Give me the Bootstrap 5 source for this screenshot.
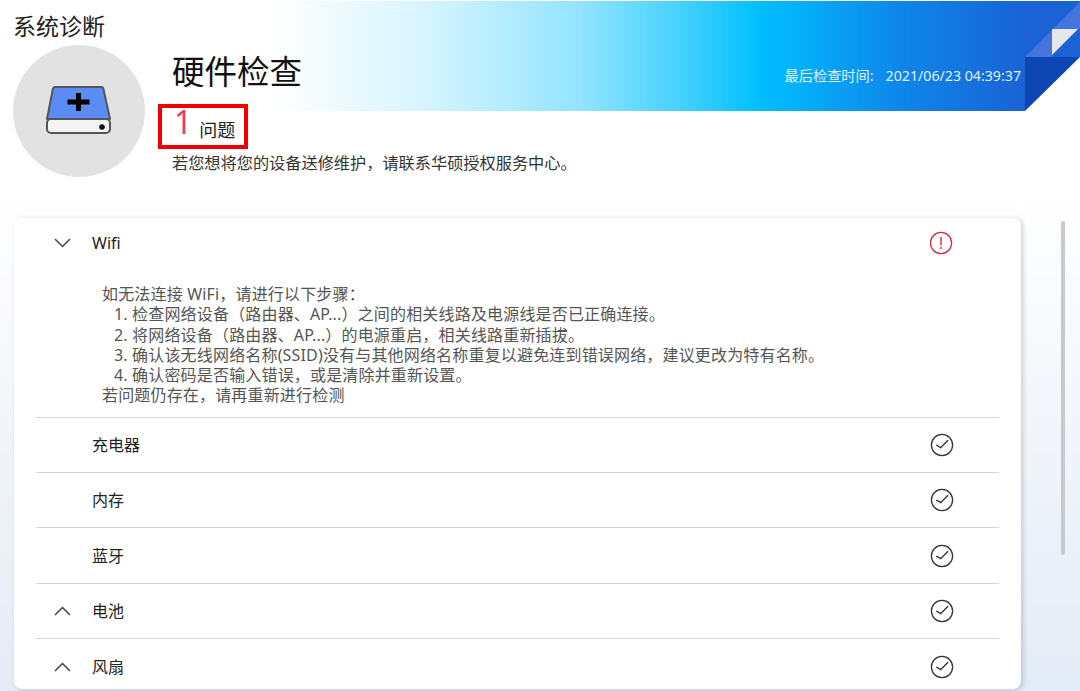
<!DOCTYPE html>
<html lang="zh-CN">
<head>
  <meta charset="UTF-8">
  <meta name="viewport" content="width=device-width, initial-scale=1.0">
  <title>系统诊断</title>
  <link href="https://cdn.jsdelivr.net/npm/bootstrap@5.3.0/dist/css/bootstrap.min.css" rel="stylesheet">
  <style>
    html, body {
      height: 691px;
      overflow: hidden;
    }
    body {
      font-family: "Noto Sans", "Noto Sans CJK SC", sans-serif;
      color: #222;
      background: linear-gradient(180deg, #fff 0, #fff 190px, #e3ebf6 691px);
    }
    .diag-head {
      position: relative;
      height: 218px;
      background-image: linear-gradient(90deg, #fff 270px, #d8f5ff 420px, #93e4ff 580px, #3dcfff 690px, #00bfff 760px, #0e86ea 900px, #1a62d6 1025px);
      background-size: 1025px 110px;
      background-position: 0 1px;
      background-repeat: no-repeat;
    }
    .head-fold {
      position: absolute;
      top: 0;
      right: 0;
    }
    .app-title {
      font-size: 23px;
      line-height: 30px;
      font-weight: 400;
      margin: 0;
      padding: 11px 0 0 13px;
      height: 45px;
    }
    .drive-disc {
      width: 132px;
      height: 132px;
      margin-left: 13px;
      background: #e2e2e2;
      flex-shrink: 0;
    }
    .drive-disc svg {
      margin-bottom: 2px;
    }
    .head-info {
      padding-left: 13px;
      flex: 1;
    }
    .head-top {
      height: 59px;
      padding: 7px 59px 0 14px;
    }
    .head-top h2 {
      font-size: 32.5px;
      line-height: 40px;
      font-weight: 400;
      color: #111;
      margin: 0;
    }
    .check-time {
      font-size: 14.2px;
      line-height: 18px;
      color: #dff4ff;
      margin-top: 15px;
    }
    .check-time span {
      margin-left: 12px;
    }
    .issue-box {
      width: 90px;
      height: 45px;
      border: 4px solid #f00000;
      padding-left: 12px;
    }
    .issue-num {
      font-size: 32px;
      line-height: 30px;
      font-weight: 400;
      color: #f0386b;
      margin-top: -1px;
    }
    .issue-word {
      font-size: 18px;
      line-height: 24px;
      margin-left: 7px;
      margin-top: 10px;
      color: #222;
    }
    .head-note {
      font-size: 16.2px;
      line-height: 20px;
      color: #333;
      margin: 4px 0 0 14px;
    }
    .results-wrap {
      padding-left: 14px;
      gap: 40px;
    }
    .results-card {
      width: 1007px;
      height: 471px;
      padding: 0 22px;
      border: 0;
      border-radius: 8px;
      box-shadow: 2px 1px 5px rgba(60, 80, 110, .25);
      overflow: hidden;
    }
    .result-row {
      height: 55.3px;
      padding: 0;
      border: 0;
      border-bottom: 1px solid #d4d4d4;
      background: transparent;
      font-size: 16px;
      color: #222;
    }
    .result-row:last-child {
      border-bottom: 0;
    }
    .result-row.top-row {
      height: 50px;
      border-bottom: 0;
    }
    .chev-slot {
      width: 56px;
      padding-left: 18px;
    }
    .row-name {
      flex: 1;
    }
    .state-slot {
      width: 69px;
    }
    .wifi-help {
      font-size: 16px;
      line-height: 20.3px;
      letter-spacing: .17px;
      color: #555;
      padding: 16px 0 11px 66px;
      border-bottom: 1px solid #d4d4d4;
    }
    .wifi-help div.step {
      padding-left: 12px;
    }
    .scroll-thumb {
      width: 4px;
      height: 334px;
      margin-top: 3px;
      background: #c9c9c9;
      border-radius: 2px;
    }
  </style>
</head>
<body>
  <header class="diag-head">
    <svg class="head-fold" width="55" height="112" viewBox="1025 0 55 112">
      <polygon points="1025,1 1080,1 1080,57 1025,57" fill="#1a62d6"/>
      <polygon points="1025,57 1080,2 1080,29 1052,29 1052,57" fill="#4474dc"/>
      <polygon points="1052,29 1078,29 1052,55" fill="#e8e8e8"/>
      <polygon points="1025,57 1080,57 1025,111" fill="#0d47b4"/>
    </svg>
    <h1 class="app-title">系统诊断</h1>
    <div class="d-flex">
      <div class="drive-disc rounded-circle d-flex align-items-center justify-content-center">
        <svg width="68" height="50" viewBox="0 0 68 50">
          <path d="M8 3.500Q8.500 2 10 2H56Q58 2 58.300 3.500L65 34H2Z" fill="#5b8cf5" stroke="#555" stroke-width="2" stroke-linejoin="round"/>
          <rect x="2" y="34" width="63" height="14" rx="4" fill="#f4f4f4" stroke="#555" stroke-width="2"/>
          <path d="M33.500 8V26M22.500 17H44.500" fill="none" stroke="#000" stroke-width="5"/>
          <circle cx="57" cy="42" r="2.800" fill="#111"/>
        </svg>
      </div>
      <div class="head-info">
        <div class="head-top d-flex justify-content-between align-items-start">
          <h2>硬件检查</h2>
          <div class="check-time">最后检查时间:<span>2021/06/23 04:39:37</span></div>
        </div>
        <div class="issue-box d-flex align-items-start">
          <div class="issue-num">1</div>
          <div class="issue-word">问题</div>
        </div>
        <p class="head-note">若您想将您的设备送修维护，请联系华硕授权服务中心。</p>
      </div>
    </div>
  </header>

  <main class="results-wrap d-flex align-items-start">
    <div class="card results-card">
      <div class="list-group list-group-flush">
        <div class="list-group-item result-row top-row d-flex align-items-center">
          <div class="chev-slot d-flex"><svg width="17" height="10" viewBox="0 0 17 10"><path d="M1 1L8.500 8.500L16 1" fill="none" stroke="#444" stroke-width="1.500"/></svg></div>
          <div class="row-name">Wifi</div>
          <div class="state-slot d-flex">
            <svg width="24" height="24" viewBox="0 0 24 24"><circle cx="11" cy="12" r="10.600" fill="none" stroke="#d8283c" stroke-width="1.300"/><path d="M11 6V14.500" stroke="#d8283c" stroke-width="1.400"/><circle cx="11" cy="17" r="1" fill="#d8283c"/></svg>
          </div>
        </div>
        <div class="wifi-help">
          <div>如无法连接 WiFi，请进行以下步骤：</div>
          <div class="step">1. 检查网络设备（路由器、AP...）之间的相关线路及电源线是否已正确连接。</div>
          <div class="step">2. 将网络设备（路由器、AP...）的电源重启，相关线路重新插拔。</div>
          <div class="step">3. 确认该无线网络名称(SSID)没有与其他网络名称重复以避免连到错误网络，建议更改为特有名称。</div>
          <div class="step">4. 确认密码是否输入错误，或是清除并重新设置。</div>
          <div>若问题仍存在，请再重新进行检测</div>
        </div>
        <div class="list-group-item result-row d-flex align-items-center">
          <div class="chev-slot"></div>
          <div class="row-name">充电器</div>
          <div class="state-slot d-flex"><svg width="24" height="24" viewBox="0 0 24 24"><circle cx="12" cy="12" r="10.600" fill="none" stroke="#333" stroke-width="1.300"/><path d="M6.300 12L10.700 14.700L18 7.300" fill="none" stroke="#333" stroke-width="1.400"/></svg></div>
        </div>
        <div class="list-group-item result-row d-flex align-items-center">
          <div class="chev-slot"></div>
          <div class="row-name">内存</div>
          <div class="state-slot d-flex"><svg width="24" height="24" viewBox="0 0 24 24"><circle cx="12" cy="12" r="10.600" fill="none" stroke="#333" stroke-width="1.300"/><path d="M6.300 12L10.700 14.700L18 7.300" fill="none" stroke="#333" stroke-width="1.400"/></svg></div>
        </div>
        <div class="list-group-item result-row d-flex align-items-center">
          <div class="chev-slot"></div>
          <div class="row-name">蓝牙</div>
          <div class="state-slot d-flex"><svg width="24" height="24" viewBox="0 0 24 24"><circle cx="12" cy="12" r="10.600" fill="none" stroke="#333" stroke-width="1.300"/><path d="M6.300 12L10.700 14.700L18 7.300" fill="none" stroke="#333" stroke-width="1.400"/></svg></div>
        </div>
        <div class="list-group-item result-row d-flex align-items-center">
          <div class="chev-slot d-flex"><svg width="17" height="10" viewBox="0 0 17 10"><path d="M1 9L8.500 1.500L16 9" fill="none" stroke="#444" stroke-width="1.500"/></svg></div>
          <div class="row-name">电池</div>
          <div class="state-slot d-flex"><svg width="24" height="24" viewBox="0 0 24 24"><circle cx="12" cy="12" r="10.600" fill="none" stroke="#333" stroke-width="1.300"/><path d="M6.300 12L10.700 14.700L18 7.300" fill="none" stroke="#333" stroke-width="1.400"/></svg></div>
        </div>
        <div class="list-group-item result-row d-flex align-items-center">
          <div class="chev-slot d-flex"><svg width="17" height="10" viewBox="0 0 17 10"><path d="M1 9L8.500 1.500L16 9" fill="none" stroke="#444" stroke-width="1.500"/></svg></div>
          <div class="row-name">风扇</div>
          <div class="state-slot d-flex"><svg width="24" height="24" viewBox="0 0 24 24"><circle cx="12" cy="12" r="10.600" fill="none" stroke="#333" stroke-width="1.300"/><path d="M6.300 12L10.700 14.700L18 7.300" fill="none" stroke="#333" stroke-width="1.400"/></svg></div>
        </div>
      </div>
    </div>
    <div class="scroll-thumb"></div>
  </main>
  <script src="https://cdn.jsdelivr.net/npm/bootstrap@5.3.0/dist/js/bootstrap.bundle.min.js"></script>
</body>
</html>
